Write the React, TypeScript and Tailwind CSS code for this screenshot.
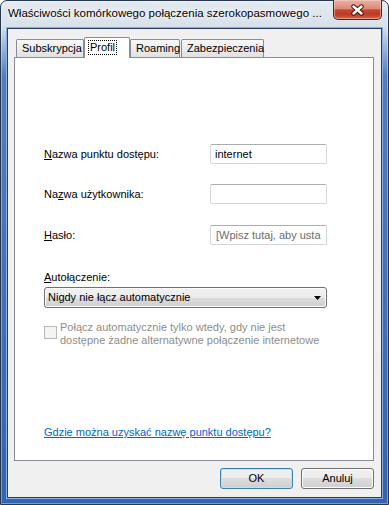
import React from "react";

function Tab({ label, w, ml = "" }: { label: string; w: string; ml?: string }) {
  return (
    <div
      className={`${w} ${ml} h-[18px] border border-b-0 border-[#898c95] rounded-t-[2px] bg-[linear-gradient(180deg,#f7f7f7_0%,#ececec_50%,#e1e1e1_100%)] pl-[5px] leading-[16px] whitespace-nowrap`}
    >
      {label}
    </div>
  );
}

export default function App() {
  return (
    <div className="w-[389px] h-[505px] bg-white font-['Liberation_Sans',Arial,sans-serif] text-[11px] text-black">
      <div className="relative flex flex-col w-[389px] h-[505px] rounded-t-[7px] border border-[#26364f] bg-[linear-gradient(180deg,#e4eaf1_0px,#d7e0ea_26px,#a9c2e3_40px,#4f7ec2_75px,#3164b1_100%)] shadow-[inset_0_0_0_1px_rgba(255,255,255,0.35)]">
        {/* title bar */}
        <div className="h-[27px] flex items-center pl-[7px] pr-[62px] pb-[1px]">
          <span className="whitespace-nowrap overflow-hidden text-[11.5px] text-[#000] [text-shadow:0_0_6px_#ffffff,0_0_3px_#ffffff]">
            Właściwości komórkowego połączenia szerokopasmowego ...
          </span>
        </div>
        {/* close button */}
        <div className="absolute top-[-1px] right-[6px] w-[49px] h-[20px] rounded-b-[5px] border border-t-0 border-[#5a2217] bg-[linear-gradient(180deg,#eab0a3_0%,#dd8c7a_45%,#c54a33_52%,#bb3a24_75%,#d4684e_100%)] shadow-[inset_0_0_0_1px_rgba(255,220,210,0.45)] flex items-center justify-center">
          <svg width="15" height="12" viewBox="0 0 15 12">
            <path d="M3.5 2.5 L11.5 9.5 M11.5 2.5 L3.5 9.5" stroke="#47160e" strokeWidth="4.4" strokeLinecap="round" fill="none" />
            <path d="M3.5 2.5 L11.5 9.5 M11.5 2.5 L3.5 9.5" stroke="#ffffff" strokeWidth="2.4" strokeLinecap="round" fill="none" />
          </svg>
        </div>

        {/* client area */}
        <div className="mx-[6px] h-[470px] border border-[#2a3d5e] bg-[#f0f0f0] shadow-[0_0_0_1px_#8cafdf] flex flex-col pl-[6px] pr-[7px] pt-[8px]">
          {/* tabs */}
          <div className="flex items-end h-[20px] pl-[2px]">
            <Tab label="Subskrypcja" w="w-[68px]" />
            <div className="relative z-10 w-[46px] h-[21px] -mb-[1px] border border-b-0 border-[#898c95] rounded-t-[2px] bg-white pl-[3px] pt-[1px]">
              <span className="inline-block border border-dotted border-black px-[1px] leading-[13px] h-[15px]">
                Profil
              </span>
            </div>
            <Tab label="Roaming" w="w-[50px]" />
            <Tab label="Zabezpieczenia" w="w-[83px]" ml="ml-[1px]" />
          </div>

          {/* panel */}
          <div className="h-[404px] border border-[#898c95] bg-white pl-[29px] flex flex-col">
            <div className="mt-[86px] h-[20px] flex items-center">
              <div className="w-[166px]">
                <span className="underline">N</span>azwa punktu dostępu:
              </div>
              <div className="w-[117px] h-[20px] rounded-[2px] border border-[#d3d6dc] border-t-[#abadb3] pl-[4px] leading-[18px]">
                internet
              </div>
            </div>
            <div className="mt-[20px] h-[20px] flex items-center">
              <div className="w-[166px]">
                Na<span className="underline">z</span>wa użytkownika:
              </div>
              <div className="w-[117px] h-[20px] rounded-[2px] border border-[#d3d6dc] border-t-[#abadb3]" />
            </div>
            <div className="mt-[21px] h-[20px] flex items-center">
              <div className="w-[166px]">
                <span className="underline">H</span>asło:
              </div>
              <div className="w-[117px] h-[20px] rounded-[2px] border border-[#d3d6dc] border-t-[#abadb3] pl-[5px] leading-[18px] text-[#6d6d6d] whitespace-nowrap overflow-hidden">
                [Wpisz tutaj, aby usta
              </div>
            </div>

            <div className="mt-[26px] leading-[13px]">
              <span className="underline">A</span>utołączenie:
            </div>
            <div className="mt-[3px] w-[283px] h-[21px] rounded-[3px] border border-[#707070] bg-[linear-gradient(180deg,#f2f2f2_0%,#ebebeb_50%,#dddddd_50%,#cfcfcf_100%)] shadow-[inset_0_0_0_1px_#fbfbfb] flex items-center pl-[3px] pr-[5px]">
              <span className="flex-1">Nigdy nie łącz automatycznie</span>
              <svg width="7" height="4" viewBox="0 0 7 4">
                <path d="M0 0 H7 L3.5 4 Z" fill="#000" />
              </svg>
            </div>

            <div className="mt-[13px] flex items-start">
              <div className="mt-[5px] w-[13px] h-[13px] border border-[#b8b8b8] bg-[#f4f4f4] shrink-0" />
              <div className="ml-[3px] leading-[13px] text-[#8d8d8d]">
                Połącz automatycznie tylko wtedy, gdy nie jest
                <br />
                dostępne żadne alternatywne połączenie internetowe
              </div>
            </div>

            <div className="mt-[79px] leading-[13px]">
              <span className="text-[#0066cc] underline">Gdzie można uzyskać nazwę punktu dostępu?</span>
            </div>
          </div>

          {/* buttons */}
          <div className="mt-[7px] flex justify-end gap-[8px]">
            <div className="w-[73px] h-[21px] rounded-[3px] border border-[#3c7fb1] bg-[linear-gradient(180deg,#f2f2f2_0%,#ebebeb_50%,#dddddd_50%,#cfcfcf_100%)] shadow-[inset_0_0_0_1px_#bfe0f6] flex items-center justify-center">
              OK
            </div>
            <div className="w-[73px] h-[21px] rounded-[3px] border border-[#707070] bg-[linear-gradient(180deg,#f2f2f2_0%,#ebebeb_50%,#dddddd_50%,#cfcfcf_100%)] shadow-[inset_0_0_0_1px_#fbfbfb] flex items-center justify-center">
              Anuluj
            </div>
          </div>
        </div>
      </div>
    </div>
  );
}
